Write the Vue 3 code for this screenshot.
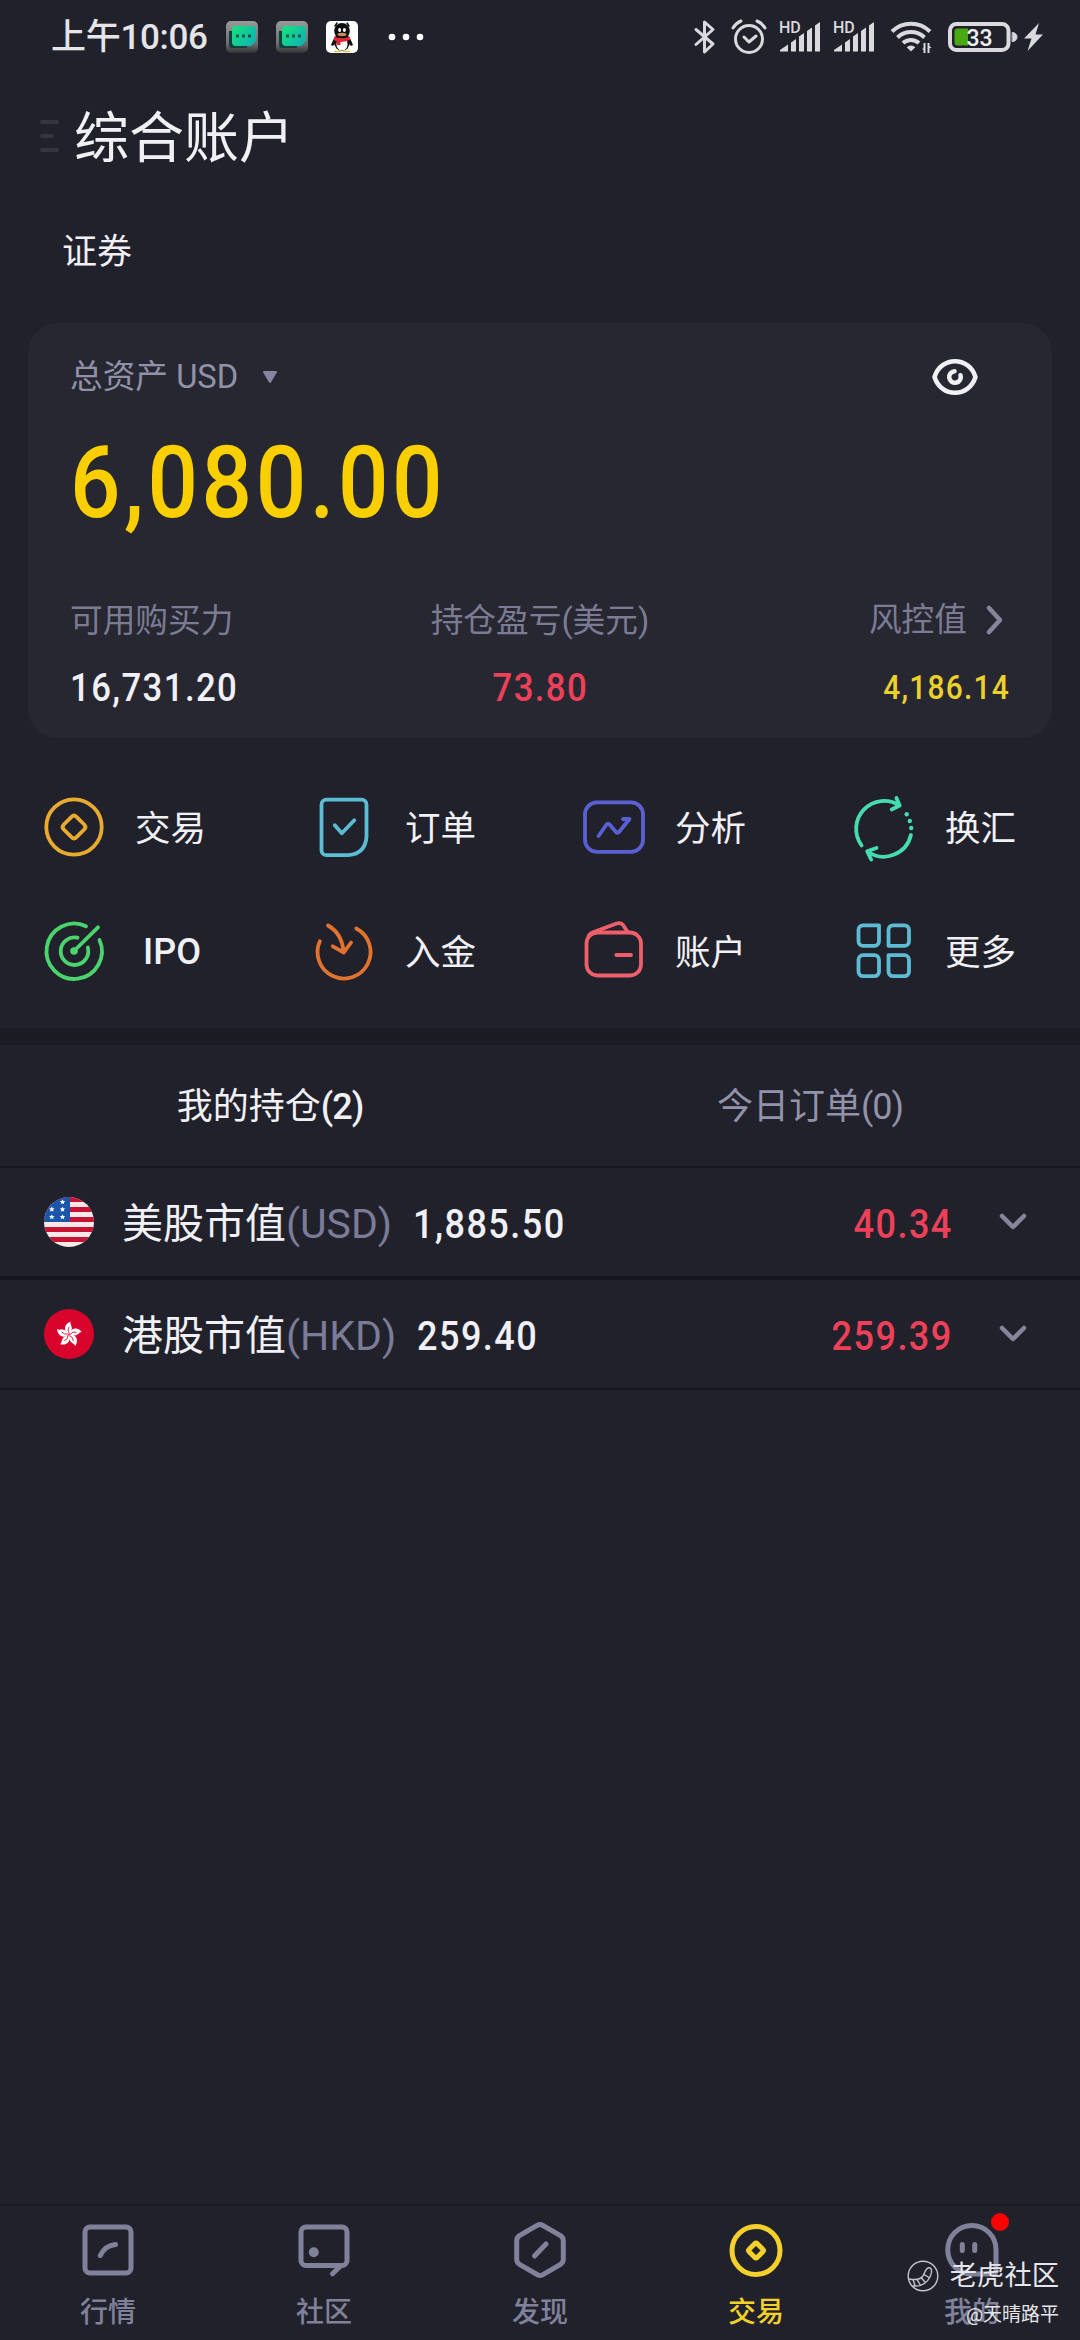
<template>
  <div class="page">
    <header class="status-bar">
      <span class="status-time">上午10:06</span>
      <svg v-for="n in 2" :key="n" class="app-icon" viewBox="0 0 32 32">
        <defs>
          <linearGradient :id="'tile' + n" x1="0" y1="0" x2="0" y2="1">
            <stop offset="0" stop-color="#969a99" />
            <stop offset="0.7" stop-color="#6b706f" />
            <stop offset="1" stop-color="#303336" />
          </linearGradient>
          <linearGradient :id="'bubble' + n" x1="0" y1="0" x2="1" y2="0.6">
            <stop offset="0" stop-color="#12e67c" />
            <stop offset="1" stop-color="#13b5ad" />
          </linearGradient>
        </defs>
        <rect width="32" height="32" rx="5" :fill="'url(#tile' + n + ')'" />
        <path d="M3 10h18v17H6a3 3 0 0 1-3-3z" fill="#123f3a" />
        <path d="M10 5h16a4 4 0 0 1 4 4v11l-5 5H10a4 4 0 0 1-4-4V9a4 4 0 0 1 4-4z" :fill="'url(#bubble' + n + ')'" />
        <path d="M10 13.500h3v3h-3zM16 13.500h3v3h-3zM22 13.500h3v3h-3z" fill="#0b5a4c" />
      </svg>
      <svg class="app-icon" viewBox="0 0 32 32">
        <rect width="32" height="32" rx="5" fill="#fff" />
        <path d="M9 5l2-3M23 5l-2-3" stroke="#111" stroke-width="1.5" />
        <path d="M8.500 16L5 24l2 1 3-4zM23.500 16L27 24l-2 1-3-4z" fill="#0d0d10" />
        <ellipse cx="16" cy="20.500" rx="8" ry="9.500" fill="#0d0d10" />
        <ellipse cx="16" cy="23" rx="5.600" ry="6.600" fill="#fff" />
        <ellipse cx="16" cy="10" rx="7.800" ry="8" fill="#0d0d10" />
        <ellipse cx="13.600" cy="9" rx="1.500" ry="2" fill="#fff" />
        <ellipse cx="18.400" cy="9" rx="1.500" ry="2" fill="#fff" />
        <ellipse cx="16" cy="13.500" rx="4.500" ry="1.700" fill="#c98d58" />
        <path d="M8 15.500q8 3.500 16 0v3.500q-5 2-9.500 2v3H11v-3.500q-2-.5-3-1.500z" fill="#e02834" />
        <path d="M8.500 30.500h6M17.500 30.500h6" stroke="#e3c54d" stroke-width="1.600" />
      </svg>
      <svg class="more-dots" viewBox="0 0 36 8">
        <circle cx="4" cy="4" r="3.300" /><circle cx="18" cy="4" r="3.300" /><circle cx="32" cy="4" r="3.300" />
      </svg>

      <div class="status-right">
        <svg class="bluetooth" viewBox="0 0 22 34">
          <path d="M2 9.500L19 24 10.500 32V2L19 9.500 2 24.500" />
        </svg>
        <svg class="alarm" viewBox="0 0 36 34">
          <circle cx="18" cy="19" r="13.500" />
          <path d="M13 17l5 5 7-6M2 8q3-5 8-7M34 8q-3-5-8-7" />
        </svg>
        <svg v-for="n in 2" :key="'sig' + n" class="signal" viewBox="0 0 42 32">
          <text x="0" y="12">HD</text>
          <path d="M1 30.500v-1.500l8-5.500v7zM12 30.500v-9l5-3.500v12.500zM20 30.500V15.500l5-3.500v18.500zM28 30.500V10l5-3.500v24zM36 30.500V4.500L41 1v29.500z" />
        </svg>
        <svg class="wifi" viewBox="0 0 44 34">
          <path d="M2 11.500a27 27 0 0 1 38 0M7.500 17.500a19.500 19.500 0 0 1 27 0M13 23a12 12 0 0 1 16 0" />
          <path class="fill" d="M21 31.500l-4.300-4.300a6.500 6.500 0 0 1 8.600 0z" />
          <path class="fill" d="M35.500 23v10h-2v-3l-1.500-1.500h1.500V23zM37.500 33V23h2v3l2 2h-2v5z" />
        </svg>
        <svg class="battery" viewBox="0 0 98 30">
          <rect x="2" y="2" width="58.500" height="26" rx="6.500" fill="none" stroke="#d9d9de" stroke-width="4" />
          <path d="M9.500 6.500H20v17H9.500a3 3 0 0 1-3-3v-11a3 3 0 0 1 3-3z" fill="#4aa810" />
          <path d="M64.500 10.500a4 4 0 0 1 0 9z" fill="#d9d9de" stroke="#d9d9de" stroke-width="1" />
          <text x="31.500" y="23.500">33</text>
          <path d="M91 1L76 16.500h7.500L79.500 29 95 12.500h-7.500z" fill="#d9d9de" />
        </svg>
      </div>
    </header>

    <div class="title-row">
      <svg class="menu-lines" viewBox="0 0 20 34">
        <path d="M2 3h15M2 17h9.500M2 31h15" />
      </svg>
      <h1>综合账户</h1>
    </div>
    <div class="account-tab">证券</div>

    <section class="asset-card">
      <div class="asset-head">
        <span>总资产 USD</span>
        <svg class="triangle" viewBox="0 0 16 14"><path d="M2 2h12L8 12z" /></svg>
        <svg class="eye" viewBox="0 0 46 38">
          <path d="M2.500 19C9-2 37-2 43.500 19 37 40 9 40 2.500 19z" />
          <path d="M22.500 13.200a5.800 5.800 0 1 0 6 4" />
        </svg>
      </div>
      <div class="asset-total"><span class="num">6,080.00</span></div>
      <div class="asset-stats">
        <div class="stat left">
          <div class="stat-label">可用购买力</div>
          <div class="stat-value"><span class="num">16,731.20</span></div>
        </div>
        <div class="stat center">
          <div class="stat-label">持仓盈亏(美元)</div>
          <div class="stat-value red"><span class="num">73.80</span></div>
        </div>
        <div class="stat right">
          <div class="stat-label">
            风控值
            <svg class="arrow" viewBox="0 0 18 30"><path d="M3 3l11 12L3 27" /></svg>
          </div>
          <div class="stat-value small yellow"><span class="num">4,186.14</span></div>
        </div>
      </div>
    </section>

    <nav class="shortcuts">
      <div v-for="item in shortcuts" :key="item.label" class="shortcut">
        <svg class="shortcut-icon" viewBox="0 0 60 60" :stroke="item.color">
          <path v-for="d in item.paths" :key="d" :d="d" />
          <circle v-for="dot in item.dots" :key="dot[1]" :cx="dot[0]" :cy="dot[1]" :r="dot[2]" :fill="item.color" stroke="none" />
        </svg>
        <span :class="{ latin: item.label === 'IPO' }">{{ item.label }}</span>
      </div>
    </nav>

    <div class="band"></div>

    <div class="tabs">
      <div class="tab active">我的持仓<span>(2)</span></div>
      <div class="tab">今日订单<span>(0)</span></div>
    </div>

    <div v-for="m in markets" :key="m.currency" class="market">
      <svg v-if="m.currency === 'USD'" class="flag" viewBox="0 0 50 50">
        <defs><clipPath id="round"><circle cx="25" cy="25" r="25" /></clipPath></defs>
        <g clip-path="url(#round)">
          <rect width="50" height="50" fill="#fbe9ea" />
          <path d="M0 2.500h50M0 12.500h50M0 22.500h50M0 32.500h50M0 42.500h50" stroke="#c81233" stroke-width="5" />
          <rect width="26" height="25" fill="#1c56ab" />
          <path v-for="s in stars" :key="s.join()" :transform="`translate(${s[0]} ${s[1]})`" d="M0-2.600l.8 1.700 1.900.2-1.400 1.300.4 1.900L0 1.500l-1.700 1 .4-1.900-1.400-1.300 1.900-.2z" fill="#fff" />
        </g>
      </svg>
      <svg v-else class="flag" viewBox="0 0 50 50">
        <circle cx="25" cy="25" r="25" fill="#d8042b" />
        <g v-for="n in 5" :key="n" :transform="`rotate(${n * 72} 25 25.500)`">
          <path d="M25 25C19 22 20 15 26.500 12.500 25.500 16 31 19 25 25z" fill="#fff" />
          <path d="M25 24q-2-3 0-6" fill="none" stroke="#d8042b" stroke-width="0.800" />
        </g>
      </svg>
      <div class="market-text">
        <span>{{ m.name }}</span>
        <span class="market-currency">({{ m.currency }})</span>
        <span class="market-value num">{{ m.value }}</span>
        <span class="market-profit num">{{ m.profit }}</span>
      </div>
      <svg class="chevron" viewBox="0 0 28 18"><path d="M3 3l11 11L25 3" /></svg>
    </div>

    <div class="blank"></div>

    <footer class="tab-bar">
      <div v-for="t in tabBar" :key="t.label" class="tab-item" :class="{ active: t.active }">
        <svg class="tab-icon" viewBox="0 0 60 60">
          <path v-for="d in t.paths" :key="d" :d="d" />
          <circle v-if="t.dot" cx="19.800" cy="32.300" r="5" class="solid" />
        </svg>
        <span>{{ t.label }}</span>
        <i v-if="t.badge" class="badge"></i>
      </div>
      <div class="watermark">
        <div class="watermark-brand">
          <svg viewBox="0 0 32 32">
            <circle cx="16" cy="16" r="14.800" />
            <path d="M2 19q10 2 14-3 2-5 4-7.500 3-2 4.500 1Q25 13 23 17 18 27 6 26M6 19.500l2 6M10 19.300l3 5.200M14 17.500l4 4.500M17 14.500l5 3" />
          </svg>
          <span>老虎社区</span>
        </div>
        <div class="watermark-user">@天晴路平</div>
      </div>
    </footer>
  </div>
</template>

<script setup>
const shortcuts = [
  {
    label: '交易',
    color: '#e9ab2f',
    paths: [
      'M30 2.300a27.700 27.700 0 1 1 0 55.400a27.700 27.700 0 1 1 0-55.400z',
      'M27.500 19.800q2.500-2.500 5 0l7.700 7.700q2.500 2.500 0 5l-7.700 7.700q-2.500 2.500-5 0l-7.700-7.700q-2.500-2.500 0-5z'
    ]
  },
  {
    label: '订单',
    color: '#5cbcd4',
    paths: [
      'M12.500 2.700h35a5 5 0 0 1 5 5v32q-1 17-18 18.500h-22a5 5 0 0 1-5-5V7.700a5 5 0 0 1 5-5z',
      'M20.800 28.300l7 8 12.500-13'
    ]
  },
  {
    label: '分析',
    color: '#5a60d2',
    paths: [
      'M13 5.300h34a12 12 0 0 1 12 12v25.500a12 12 0 0 1-12 12H13a12 12 0 0 1-12-12V17.300a12 12 0 0 1 12-12z',
      'M14.500 39l8-11.500q1.300-1.800 3 0l6.500 7.500q1.500 1.700 3 0l10.500-13h-6.500'
    ]
  },
  {
    label: '换汇',
    color: '#45ddb0',
    paths: [
      'M7.600 48.500A28 28 0 0 1 45.500 8.500M42.400 1l3.300 7.500-8 4',
      'M56.900 38A28 28 0 0 1 13.500 54.500M22.500 51l-9.300 3.300 4 8.200'
    ],
    dots: [[52.7, 17.3, 2.2], [55.8, 24, 2.2], [57.2, 31, 2.2]]
  },
  {
    label: 'IPO',
    color: '#4bd46e',
    paths: [
      'M42 5.200A27.700 27.700 0 1 0 55.500 19',
      'M33.500 16.700A13.800 13.800 0 1 0 43.800 26.500',
      'M30 30L54 6.300'
    ],
    dots: [[30, 30, 3.8]]
  },
  {
    label: '入金',
    color: '#e2732f',
    paths: [
      'M5.800 20.300A26.500 26.500 0 1 0 42.300 7.500',
      'M14 4.500q14 8 15.500 26M18.800 25.300l11 6.200 7.300-10'
    ]
  },
  {
    label: '账户',
    color: '#ee5f6b',
    paths: [
      'M13.500 11.500h32.500a11 11 0 0 1 11 11v21a11 11 0 0 1-11 11H13.500a11 11 0 0 1-11-11v-21a11 11 0 0 1 11-11z',
      'M4.500 15.500q1-3 4.500-4.300l23-8.500q4.500-1.500 7 1.300l4.500 6.800',
      'M32.300 34h14.700'
    ]
  },
  {
    label: '更多',
    color: '#5cbcd4',
    paths: [
      'M9 4.300h16v16a4.500 4.500 0 0 1-4.500 4.500H9a4.500 4.500 0 0 1-4.500-4.500V8.800A4.500 4.500 0 0 1 9 4.300z',
      'M39 4.300h11.500a4.500 4.500 0 0 1 4.500 4.500v11.500a4.500 4.500 0 0 1-4.500 4.500h-16v-16a4.500 4.500 0 0 1 4.500-4.500z',
      'M9 34.200h11.500a4.500 4.500 0 0 1 4.500 4.500v12a4.500 4.500 0 0 1-4.500 4.500H9a4.500 4.500 0 0 1-4.500-4.500v-12a4.500 4.500 0 0 1 4.500-4.500z',
      'M34.500 34.200h16a4.500 4.500 0 0 1 4.500 4.500v12a4.500 4.500 0 0 1-4.500 4.500H39a4.500 4.500 0 0 1-4.500-4.500z'
    ]
  }
]

const stars = [[18.5, 4.8], [7.8, 12.2], [18.5, 12.2], [7.8, 19.8], [18.5, 19.8]]

const markets = [
  { name: '美股市值', currency: 'USD', value: '1,885.50', profit: '40.34' },
  { name: '港股市值', currency: 'HKD', value: '259.40', profit: '259.39' }
]

const tabBar = [
  {
    label: '行情',
    paths: [
      'M12 7h36a5 5 0 0 1 5 5v36a5 5 0 0 1-5 5H12a5 5 0 0 1-5-5V12a5 5 0 0 1 5-5z',
      'M22.300 35.500Q27 25.500 37.500 24.500'
    ]
  },
  {
    label: '社区',
    dot: true,
    paths: [
      'M12 7h36a5 5 0 0 1 5 5v28.500a5 5 0 0 1-5 5H12a5 5 0 0 1-5-5V12a5 5 0 0 1 5-5z',
      'M46 46.500l-7.500 7.300'
    ]
  },
  {
    label: '发现',
    paths: [
      'M27.500 5.200q2.500-1.400 5 0l18 10.500q2.800 1.700 2.800 5v18.600q0 3.300-2.800 5l-18 10.500q-2.500 1.400-5 0l-18-10.500q-2.800-1.700-2.800-5V20.700q0-3.300 2.800-5z',
      'M24.500 36L36 24'
    ]
  },
  {
    label: '交易',
    active: true,
    paths: [
      'M30 6.500a24 24 0 1 1 0 48a24 24 0 1 1 0-48z',
      'M28.700 23.700q1.300-1.200 2.600 0l5.500 5.500q1.300 1.300 0 2.600l-5.500 5.500q-1.300 1.200-2.600 0l-5.500-5.500q-1.300-1.300 0-2.600z'
    ]
  },
  {
    label: '我的',
    badge: true,
    paths: [
      'M30 5.500a24 24 0 0 1 24 24v21q0 3.500-3.500 3.500H30a24.200 24.200 0 1 1 0-48.500z',
      'M20.300 24.500v6M32.700 24.500v6'
    ]
  }
]
</script>

<style>
html,
body {
  margin: 0;
  background: #21212b;
}
</style>

<style scoped>
.page {
  display: flex;
  flex-direction: column;
  width: 1080px;
  height: 2340px;
  overflow: hidden;
  background: #21212b;
  color: #f0f0f5;
  font-family: Roboto, 'Noto Sans CJK SC', sans-serif;
}

svg {
  display: block;
  flex-shrink: 0;
  overflow: visible;
  stroke-linecap: round;
  stroke-linejoin: round;
}

/* 数字用窄一点的字形 */
.num {
  display: inline-block;
  font-weight: 500;
  letter-spacing: 0.04em;
  transform: scaleX(0.88);
  transform-origin: left center;
}

/* 状态栏 */
.status-bar {
  display: flex;
  align-items: center;
  height: 74px;
  padding: 0 36px 0 51px;
}

.status-time {
  width: 175px;
  font-size: 35px;
  font-weight: 500;
  line-height: 72px;
  padding-top: 2px;
  white-space: nowrap;
  color: #e4e4e9;
  letter-spacing: -0.3px;
}

.app-icon {
  width: 32px;
  height: 32px;
  margin-right: 18px;
}

.more-dots {
  width: 36px;
  height: 8px;
  margin-left: 12px;
  fill: #fff;
}

.status-right {
  display: flex;
  align-items: center;
  margin-left: auto;
  color: #d9d9de;
}

.bluetooth,
.alarm,
.wifi {
  fill: none;
  stroke: #d9d9de;
  stroke-width: 3;
}

.bluetooth {
  width: 22px;
  height: 34px;
  margin-right: 15px;
}

.alarm {
  width: 36px;
  height: 34px;
  margin-right: 12px;
}

.signal {
  width: 42px;
  height: 32px;
  margin-right: 12px;
  fill: #d9d9de;
}

.signal text {
  font-size: 16px;
  font-weight: 500;
}

.wifi {
  width: 44px;
  height: 34px;
  margin-left: 3px;
  margin-right: 14px;
  stroke-width: 4;
  stroke-linecap: butt;
}

.wifi .fill {
  fill: #d9d9de;
  stroke: none;
}

.battery {
  width: 98px;
  height: 30px;
  margin-right: -2px;
}

.battery text {
  font-size: 23px;
  font-weight: 500;
  fill: #f0f0f3;
  text-anchor: middle;
}

/* 标题 */
.title-row {
  display: flex;
  align-items: center;
  height: 124px;
  padding-left: 40px;
}

.menu-lines {
  width: 20px;
  height: 34px;
  fill: none;
  stroke: #35353f;
  stroke-width: 4;
}

.title-row h1 {
  margin: 0 0 0 14px;
  padding-top: 4px;
  font-size: 55px;
  font-weight: 400;
  line-height: 80px;
}

.account-tab {
  height: 125px;
  padding-left: 62px;
  font-size: 35px;
  line-height: 110px;
}

/* 资产卡片 */
.asset-card {
  height: 415px;
  margin: 0 28px;
  box-sizing: border-box;
  padding: 26px 42px 0;
  border-radius: 30px;
  background: #272732;
}

.asset-head {
  display: flex;
  align-items: center;
  height: 56px;
  font-size: 32.7px;
  line-height: 58px;
  color: #9192a9;
}

.triangle {
  width: 16px;
  height: 14px;
  margin-left: 24px;
  fill: #85869f;
  stroke: #85869f;
  stroke-width: 2;
}

.eye {
  width: 46px;
  height: 38px;
  margin-left: auto;
  margin-right: 32px;
  fill: none;
  stroke: #f0f0f5;
  stroke-width: 4.5;
}

.asset-total {
  height: 184px;
  font-size: 101px;
  line-height: 156px;
  color: #f9cf00;
}

.asset-stats {
  display: grid;
  grid-template-columns: 1fr 1fr 1fr;
}

.stat-label {
  height: 62px;
  font-size: 32.7px;
  line-height: 65px;
  color: #7b7c93;
}

.stat-value {
  height: 68px;
  font-size: 39.5px;
  line-height: 73px;
}

.stat.center {
  text-align: center;
}

.stat.center .num {
  transform-origin: center;
}

.stat.right .stat-label {
  display: flex;
  align-items: center;
  justify-content: flex-end;
}

.stat.right .stat-value {
  text-align: right;
}

.stat.right .num,
.market-profit {
  transform-origin: right center;
}

.stat-value.small {
  font-size: 34px;
}

.arrow {
  width: 18px;
  height: 30px;
  margin-left: 19px;
  margin-right: 6px;
  fill: none;
  stroke: #85869c;
  stroke-width: 4.5;
}

.red {
  color: #ee4059;
}

.yellow {
  color: #ecd02b;
}

/* 快捷入口 */
.shortcuts {
  display: grid;
  grid-template-columns: repeat(4, 270px);
  grid-auto-rows: 124px;
  height: 290px;
  padding-top: 27px;
  box-sizing: border-box;
}

.shortcut {
  display: flex;
  align-items: center;
  padding-left: 44px;
  font-size: 35.5px;
}

.shortcut-icon {
  width: 60px;
  height: 60px;
  margin-right: 31px;
  fill: none;
  stroke-width: 3.8;
}

.shortcut span {
  padding-bottom: 4px;
}

.shortcut .latin {
  margin-left: 8px;
  padding-bottom: 0;
  padding-top: 2px;
  font-size: 36px;
  font-weight: 500;
}

.band {
  height: 17px;
  background: #1b1b24;
}

.tabs {
  display: flex;
  height: 121px;
  border-bottom: 2px solid #15151e;
}

.tab {
  flex: 1;
  font-size: 36px;
  line-height: 124px;
  text-align: center;
  color: #9293aa;
}

.tab span {
  letter-spacing: -1px;
}

.tab.active {
  color: #f0f0f5;
}

.tab.active span {
  font-weight: 500;
}

/* 市值列表 */
.market {
  display: flex;
  align-items: center;
  height: 108px;
  padding: 0 53px 0 44px;
  border-bottom: 4px solid #15151e;
}

.market + .market {
  border-bottom-width: 2px;
}

.flag {
  width: 50px;
  height: 50px;
  margin-right: 28px;
}

.market-text {
  display: flex;
  flex: 1;
  padding-top: 5px;
  font-size: 41px;
  line-height: 103px;
}

.market-currency {
  color: #7b7c97;
}

.market-value {
  margin-left: 21px;
}

.market-profit {
  margin-left: auto;
  color: #ee4059;
}

.chevron {
  width: 28px;
  height: 18px;
  margin-left: 46px;
  fill: none;
  stroke: #85869c;
  stroke-width: 4.5;
}

.blank {
  flex: 1;
}

/* 底部导航 */
.tab-bar {
  position: relative;
  display: flex;
  height: 134px;
  border-top: 2px solid #191921;
}

.tab-item {
  position: relative;
  display: flex;
  flex: 1;
  flex-direction: column;
  align-items: center;
  padding-top: 14px;
  font-size: 28px;
  font-weight: 500;
  line-height: 40px;
  color: #80819a;
}

.tab-icon {
  width: 60px;
  height: 60px;
  margin-bottom: 13px;
  fill: none;
  stroke: currentColor;
  stroke-width: 5;
}

.tab-icon .solid {
  fill: currentColor;
  stroke: none;
}

.tab-item.active {
  color: #f3d02a;
}

.badge {
  position: absolute;
  top: 7px;
  left: 127px;
  width: 18px;
  height: 18px;
  border-radius: 50%;
  background: #fe0000;
}

/* 水印 */
.watermark {
  position: absolute;
  right: 21px;
  top: 50px;
  display: flex;
  flex-direction: column;
  align-items: flex-end;
  color: #e6e6ea;
}

.watermark-brand {
  display: flex;
  align-items: center;
  height: 40px;
  font-size: 27.3px;
  font-weight: 400;
  line-height: 42px;
}

.watermark-brand svg {
  width: 32px;
  height: 32px;
  margin-right: 11px;
  fill: none;
  stroke: #c4c4ca;
  stroke-width: 1.4;
}

.watermark-user {
  margin-top: 1px;
  font-size: 19px;
  line-height: 36px;
}
</style>
